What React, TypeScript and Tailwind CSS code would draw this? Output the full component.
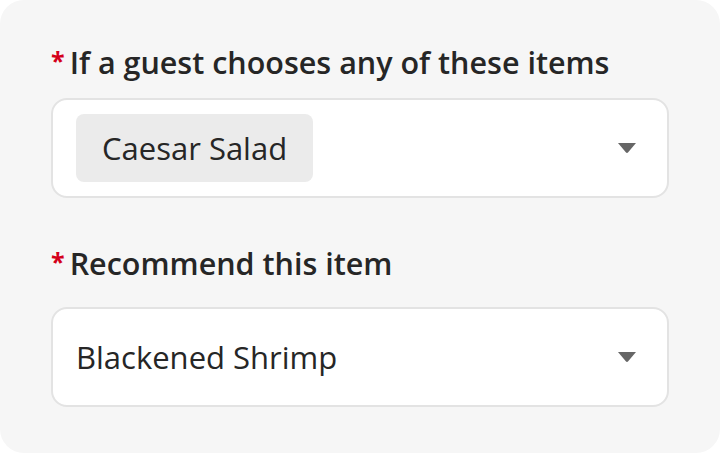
const Caret = () => (
  <svg width="18" height="10" viewBox="0 0 18 10" className="shrink-0">
    <path d="M0 0h18L10.2 9.2a1.6 1.6 0 0 1-2.4 0Z" fill="#666666" />
  </svg>
);

const Label = ({ children }: { children: React.ReactNode }) => (
  <div className="flex items-start text-[30.5px] leading-[36px] font-semibold text-[#262626]">
    <span className="text-[#d4001a] text-[25px] leading-[30px] font-bold mr-[5px] mt-[1px]">*</span>
    <span>{children}</span>
  </div>
);

export default function App() {
  return (
    <div className="w-[720px] h-[455px] bg-white font-['Open_Sans',sans-serif]">
      <div className="h-[453px] rounded-[24px] bg-[#f6f6f6] px-[51px] pt-[44px]">
        <Label>If a guest chooses any of these items</Label>
        <div className="mt-[18px] h-[100px] rounded-[16px] border-2 border-[#e3e3e3] bg-white flex items-center pl-[23px] pr-[31px]">
          <div className="h-[68px] px-[26px] rounded-[8px] bg-[#ebebeb] flex items-center text-[31px] text-[#262626]">
            Caesar Salad
          </div>
          <div className="flex-1" />
          <Caret />
        </div>
        <div className="mt-[47px]">
          <Label>Recommend this item</Label>
        </div>
        <div className="mt-[26px] h-[100px] rounded-[16px] border-2 border-[#e3e3e3] bg-white flex items-center pl-[23px] pr-[31px]">
          <span className="text-[31px] text-[#262626]">Blackened Shrimp</span>
          <div className="flex-1" />
          <Caret />
        </div>
      </div>
    </div>
  );
}
